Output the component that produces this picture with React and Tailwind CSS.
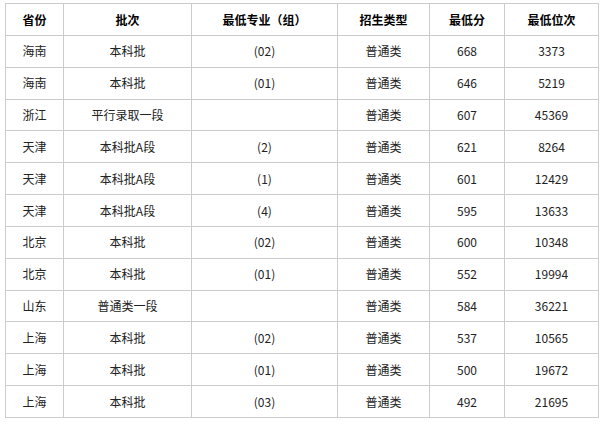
const rows = [
  ['海南', '本科批', '(02)', '普通类', '668', '3373'],
  ['海南', '本科批', '(01)', '普通类', '646', '5219'],
  ['浙江', '平行录取一段', '', '普通类', '607', '45369'],
  ['天津', '本科批A段', '(2)', '普通类', '621', '8264'],
  ['天津', '本科批A段', '(1)', '普通类', '601', '12429'],
  ['天津', '本科批A段', '(4)', '普通类', '595', '13633'],
  ['北京', '本科批', '(02)', '普通类', '600', '10348'],
  ['北京', '本科批', '(01)', '普通类', '552', '19994'],
  ['山东', '普通类一段', '', '普通类', '584', '36221'],
  ['上海', '本科批', '(02)', '普通类', '537', '10565'],
  ['上海', '本科批', '(01)', '普通类', '500', '19672'],
  ['上海', '本科批', '(03)', '普通类', '492', '21695'],
]

const headers = ['省份', '批次', '最低专业（组）', '招生类型', '最低分', '最低位次']

export default function App() {
  return (
    <div className="w-[605px] h-[425px] bg-white overflow-hidden pl-[5px] pt-[3px] font-['Noto_Sans_CJK_SC','Microsoft_YaHei',sans-serif] text-[12px] text-[#222]">
      <table className="w-[593px] table-fixed border-collapse">
        <colgroup>
          <col className="w-[58px]" />
          <col className="w-[128px]" />
          <col className="w-[146px]" />
          <col className="w-[92px]" />
          <col className="w-[75px]" />
          <col className="w-[94px]" />
        </colgroup>
        <thead>
          <tr className="h-[32px]">
            {headers.map((h) => (
              <th key={h} className="border border-[#cccccc] text-center font-bold text-black p-0">
                {h}
              </th>
            ))}
          </tr>
        </thead>
        <tbody>
          {rows.map((r, i) => (
            <tr key={i} className="h-[31.83px]">
              {r.map((c, j) => (
                <td key={j} className="border border-[#cccccc] text-center font-normal p-0">
                  {c}
                </td>
              ))}
            </tr>
          ))}
        </tbody>
      </table>
    </div>
  )
}
